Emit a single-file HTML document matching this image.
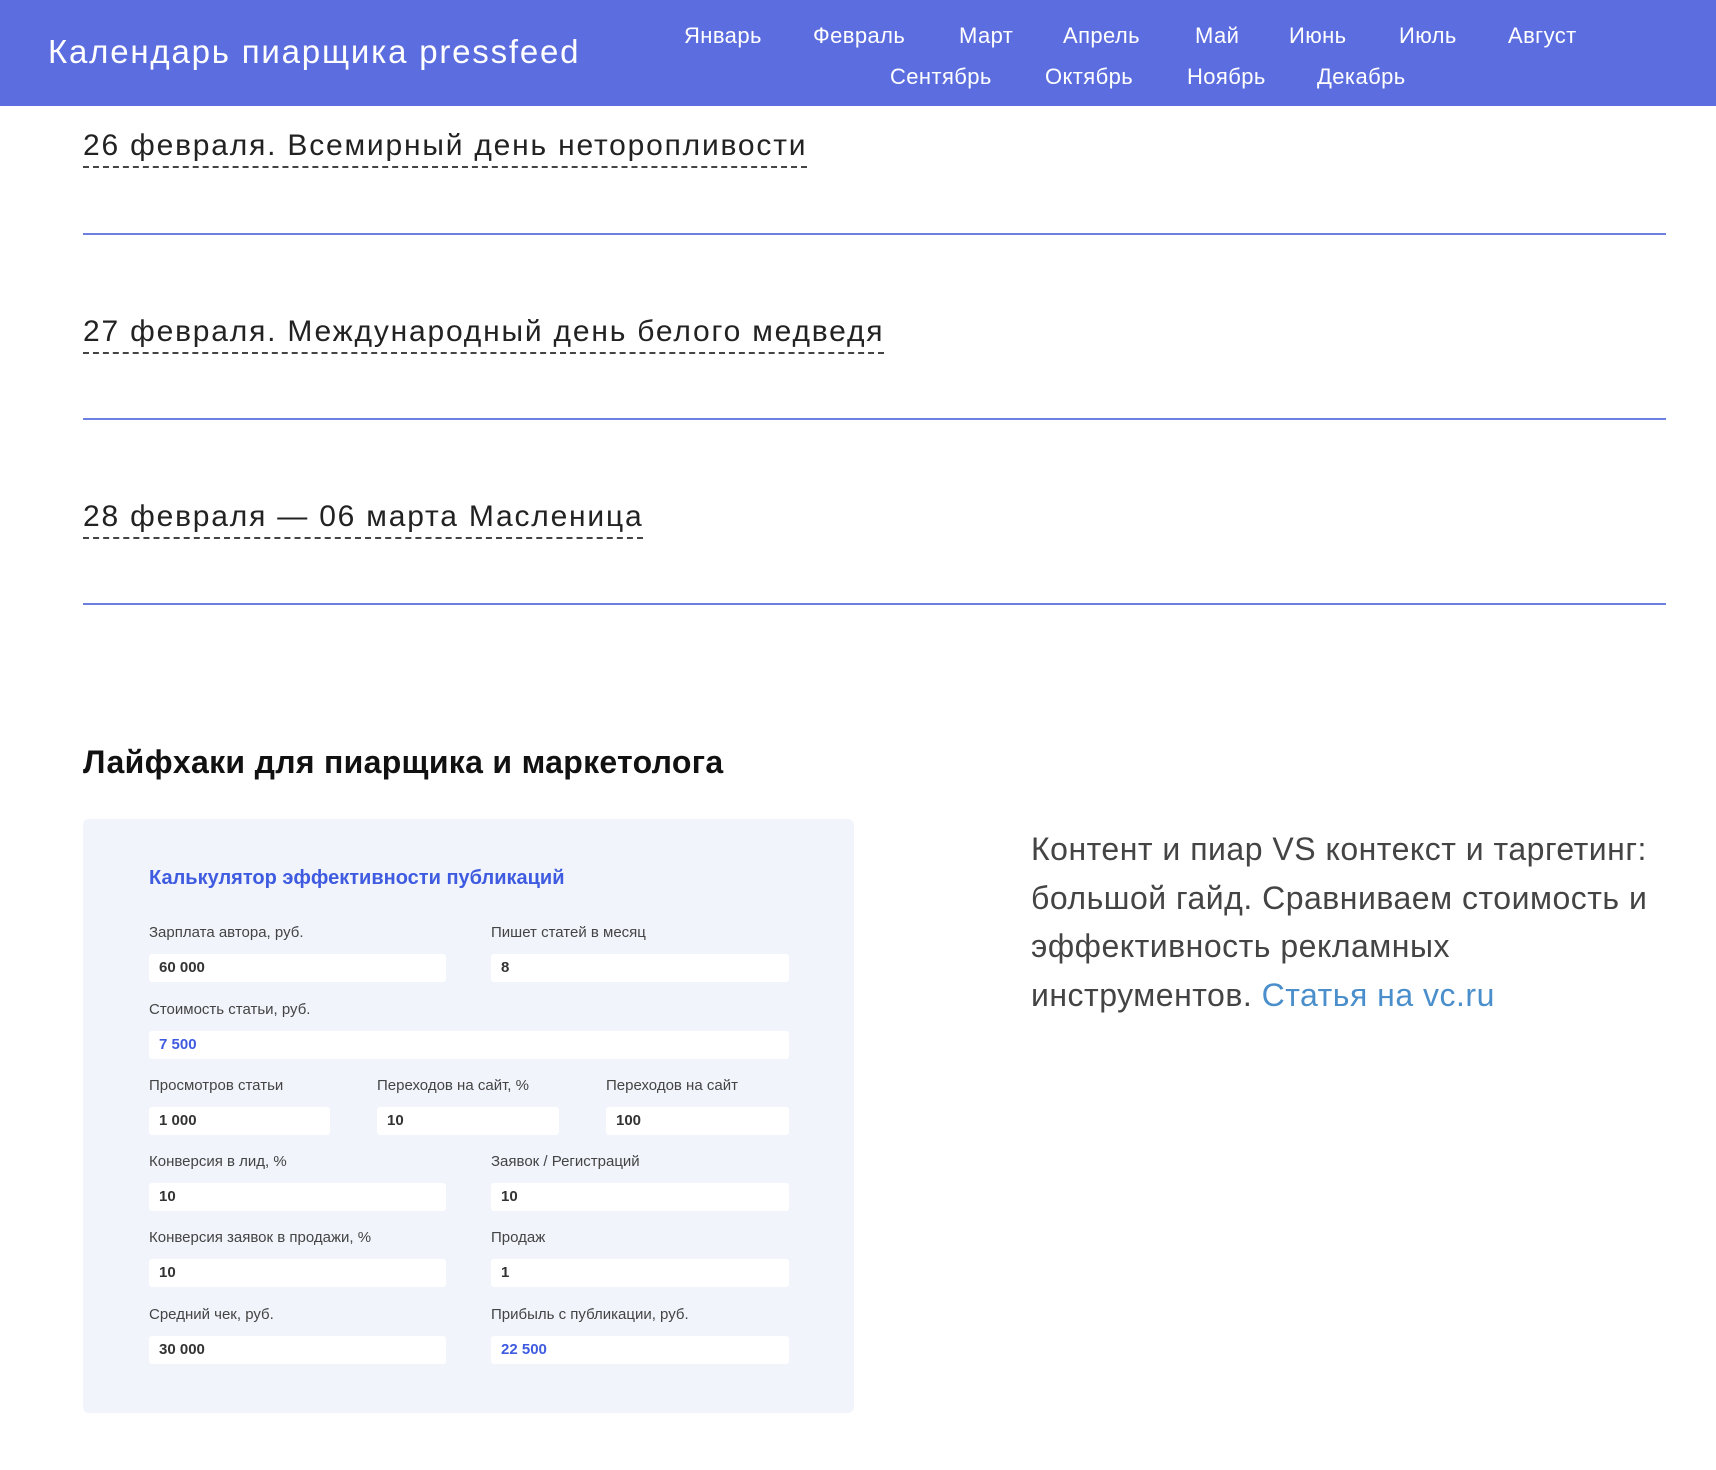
<!DOCTYPE html>
<html><head><meta charset="utf-8"><style>
*{margin:0;padding:0;box-sizing:border-box}
body{width:1716px;height:1470px;background:#fff;font-family:"Liberation Sans","DejaVu Sans",sans-serif;position:relative;overflow:hidden}
.a{position:absolute;white-space:nowrap}
#hdr{position:absolute;left:0;top:0;width:1716px;height:106px;background:#5c6ddf}
.nav{color:#fff;font-size:22px;line-height:26px;letter-spacing:0.4px}
.ev{font-size:30px;color:#222;line-height:36px;border-bottom:2px dashed #444;padding-bottom:2px;letter-spacing:1.8px}
.hr{position:absolute;left:83px;width:1583px;height:2px;background:#6d7fe0}
.lab{font-size:15px;color:#444;line-height:18px}
.in{position:absolute;height:28px;background:#fff;border-radius:3px;font-size:15px;font-weight:bold;color:#333;line-height:28px;padding-left:10px}
.bl{color:#3f5be0}
</style></head><body>
<div id="hdr"></div>
<div class="a" style="left:48px;top:32px;font-size:33px;color:#fff;line-height:40px;letter-spacing:1.8px">Календарь пиарщика pressfeed</div>
<div class="a nav" style="left:684px;top:23px">Январь</div>
<div class="a nav" style="left:813px;top:23px">Февраль</div>
<div class="a nav" style="left:959px;top:23px">Март</div>
<div class="a nav" style="left:1063px;top:23px">Апрель</div>
<div class="a nav" style="left:1195px;top:23px">Май</div>
<div class="a nav" style="left:1289px;top:23px">Июнь</div>
<div class="a nav" style="left:1399px;top:23px">Июль</div>
<div class="a nav" style="left:1508px;top:23px">Август</div>
<div class="a nav" style="left:890px;top:64px">Сентябрь</div>
<div class="a nav" style="left:1045px;top:64px">Октябрь</div>
<div class="a nav" style="left:1187px;top:64px">Ноябрь</div>
<div class="a nav" style="left:1317px;top:64px">Декабрь</div>

<div class="a ev" style="left:83px;top:128px">26 февраля. Всемирный день неторопливости</div>
<div class="hr" style="top:233px"></div>
<div class="a ev" style="left:83px;top:314px">27 февраля. Международный день белого медведя</div>
<div class="hr" style="top:418px"></div>
<div class="a ev" style="left:83px;top:499px">28 февраля — 06 марта Масленица</div>
<div class="hr" style="top:603px"></div>

<div class="a" style="left:83px;top:743px;font-size:32px;font-weight:bold;color:#111;line-height:38px;letter-spacing:0.3px">Лайфхаки для пиарщика и маркетолога</div>

<div class="a" style="left:83px;top:819px;width:771px;height:594px;background:#f1f4fb;border-radius:6px"></div>
<div class="a bl" style="left:149px;top:866px;font-size:20px;font-weight:bold;line-height:24px">Калькулятор эффективности публикаций</div>

<div class="a lab" style="left:149px;top:924px">Зарплата автора, руб.</div>
<div class="a lab" style="left:491px;top:924px">Пишет статей в месяц</div>
<div class="in" style="left:149px;top:954px;width:297px">60 000</div>
<div class="in" style="left:491px;top:954px;width:298px">8</div>

<div class="a lab" style="left:149px;top:1001px">Стоимость статьи, руб.</div>
<div class="in bl" style="left:149px;top:1031px;width:640px">7 500</div>

<div class="a lab" style="left:149px;top:1077px">Просмотров статьи</div>
<div class="a lab" style="left:377px;top:1077px">Переходов на сайт, %</div>
<div class="a lab" style="left:606px;top:1077px">Переходов на сайт</div>
<div class="in" style="left:149px;top:1107px;width:181px">1 000</div>
<div class="in" style="left:377px;top:1107px;width:182px">10</div>
<div class="in" style="left:606px;top:1107px;width:183px">100</div>

<div class="a lab" style="left:149px;top:1153px">Конверсия в лид, %</div>
<div class="a lab" style="left:491px;top:1153px">Заявок / Регистраций</div>
<div class="in" style="left:149px;top:1183px;width:297px">10</div>
<div class="in" style="left:491px;top:1183px;width:298px">10</div>

<div class="a lab" style="left:149px;top:1229px">Конверсия заявок в продажи, %</div>
<div class="a lab" style="left:491px;top:1229px">Продаж</div>
<div class="in" style="left:149px;top:1259px;width:297px">10</div>
<div class="in" style="left:491px;top:1259px;width:298px">1</div>

<div class="a lab" style="left:149px;top:1306px">Средний чек, руб.</div>
<div class="a lab" style="left:491px;top:1306px">Прибыль с публикации, руб.</div>
<div class="in" style="left:149px;top:1336px;width:297px">30 000</div>
<div class="in bl" style="left:491px;top:1336px;width:298px">22 500</div>

<div class="a" style="left:1031px;top:825px;font-size:32px;color:#444;line-height:48.5px;font-weight:300;letter-spacing:0.5px">Контент и пиар VS контекст и таргетинг:<br>большой гайд. Сравниваем стоимость и<br>эффективность рекламных<br>инструментов. <span style="color:#4a8fcb">Статья на vc.ru</span></div>
</body></html>
